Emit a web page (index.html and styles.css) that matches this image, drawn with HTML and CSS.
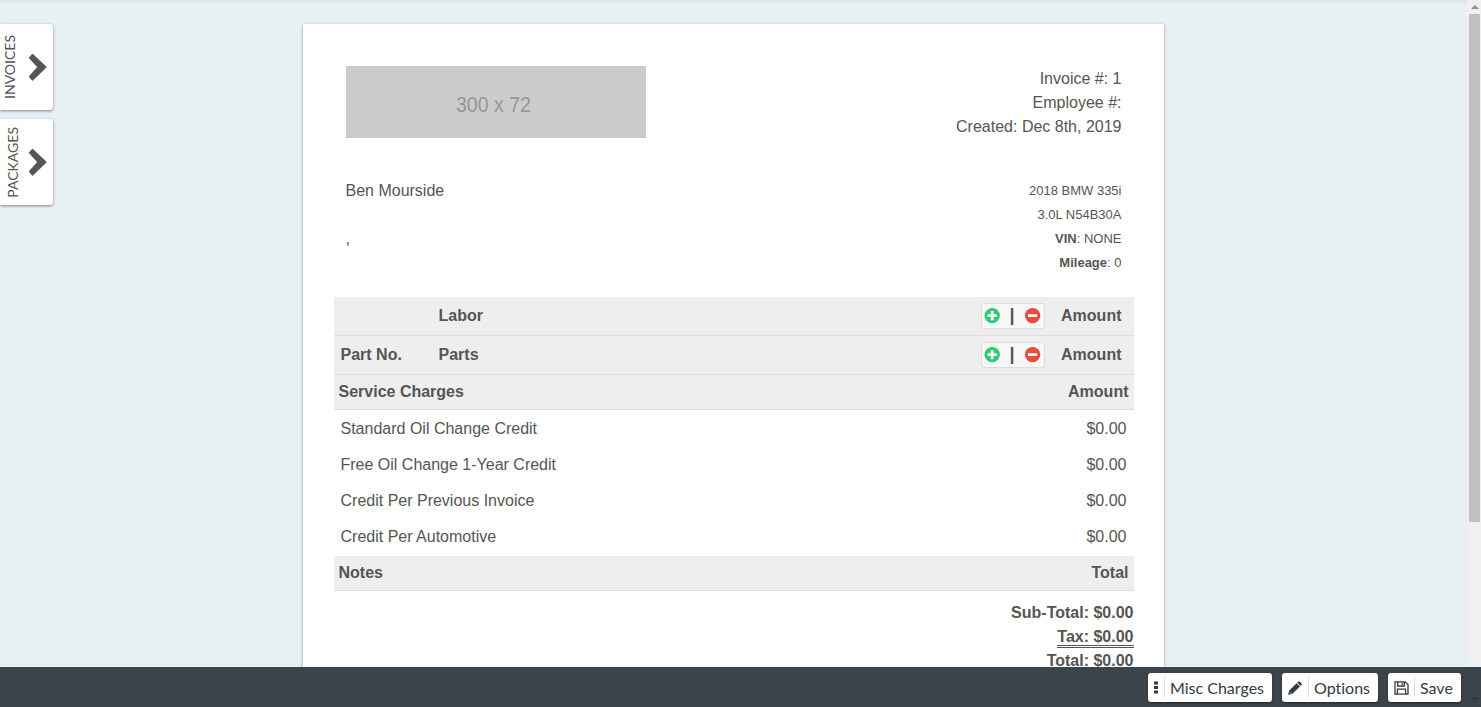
FILE: index.html
```html
<!DOCTYPE html>
<html lang="en">
<head>
<meta charset="utf-8">
<title>Invoice</title>
<link rel="stylesheet" href="styles.css">
</head>
<body>
<svg width="0" height="0" class="defs">
  <symbol id="chevron" viewBox="0 0 20 28"><path d="M5.4 1.7 18.7 14.1 5.4 26.8 2.7 23.6 11.3 14.1 2.7 4.8z" fill="#555" stroke="#555" stroke-width="1.6" stroke-linejoin="round"/></symbol>
  <symbol id="plus" viewBox="0 0 16 16"><circle cx="8.2" cy="7.6" r="7.7" fill="#2ecc71"/><path d="M8.2 3v9.2M3.6 7.6h9.2" stroke="#fff" stroke-width="2.7"/></symbol>
  <symbol id="minus" viewBox="0 0 16 16"><circle cx="8.6" cy="7.6" r="7.7" fill="#e74c3c"/><path d="M4 7.6h9.2" stroke="#fff" stroke-width="2.7"/></symbol>
</svg>
<div class="page">
  <nav class="tabs">
    <div class="tab"><span class="tab-label">INVOICES</span><svg class="chevron"><use href="#chevron"/></svg></div>
    <div class="tab packages"><span class="tab-label">PACKAGES</span><svg class="chevron"><use href="#chevron"/></svg></div>
  </nav>
  <main class="sheet">
    <header class="top">
      <svg class="logo" viewBox="0 0 300 72"><rect width="300" height="72" fill="#ccc"/><text x="110" y="46" textLength="75" lengthAdjust="spacingAndGlyphs">300 x 72</text></svg>
      <div class="meta"><div>Invoice #: 1</div><div>Employee #:</div><div>Created: Dec 8th, 2019</div></div>
    </header>
    <section class="parties">
      <div class="customer"><div>Ben Mourside</div><div>&nbsp;</div><div>,</div></div>
      <div class="vehicle"><div>2018 BMW 335i</div><div>3.0L N54B30A</div><div><b>VIN</b>: NONE</div><div><b>Mileage</b>: 0</div></div>
    </section>
    <section class="table">
      <div class="head tall"><span class="part"></span><span class="name">Labor</span><span class="tools"><svg><use href="#plus"/></svg><span>|</span><svg><use href="#minus"/></svg></span><span>Amount</span></div>
      <div class="head tall"><span class="part">Part No.</span><span class="name">Parts</span><span class="tools"><svg><use href="#plus"/></svg><span>|</span><svg><use href="#minus"/></svg></span><span>Amount</span></div>
      <div class="head"><span>Service Charges</span><span>Amount</span></div>
      <div class="rows">
        <div class="row"><span>Standard Oil Change Credit</span><span>$0.00</span></div>
        <div class="row"><span>Free Oil Change 1-Year Credit</span><span>$0.00</span></div>
        <div class="row"><span>Credit Per Previous Invoice</span><span>$0.00</span></div>
        <div class="row"><span>Credit Per Automotive</span><span>$0.00</span></div>
      </div>
      <div class="head"><span>Notes</span><span>Total</span></div>
    </section>
    <section class="totals"><div>Sub-Total: $0.00</div><div><span class="tax">Tax: $0.00</span></div><div>Total: $0.00</div></section>
  </main>
</div>
<div class="scrollbar"><svg class="up" viewBox="0 0 8 4"><path d="M0 4 4 0l4 4z" fill="#909090"/></svg><div class="thumb"></div></div>
<footer class="bar">
  <button class="btn misc"><svg width="4" height="14" viewBox="0 0 4 14"><path d="M0 .5h4v3H0zM0 5h4v3H0zM0 9.5h4v3H0z" fill="#333b42"/></svg><span>Misc Charges</span></button>
  <button class="btn options"><svg width="14" height="14" viewBox="0 0 14 14"><path d="M.3 13.5 1.4 9.4 8.6 2.6l3.1 3L4.6 12.5zM9.4 1.8 10.2 1q.8-.7 1.6 0l1.6 1.5q.7.8 0 1.6l-.8.7z" fill="#333b42" stroke="#333b42" stroke-width=".4"/><path d="M1.6 11.1l1.2 1.2" stroke="#fff" stroke-width=".8"/></svg><span>Options</span></button>
  <button class="btn save"><svg width="15" height="14" viewBox="0 0 15 14"><path d="M1 .8h10.2L14 3.6v9.6H1zM3.7 1v4h6.6V1M3.4 13V8.2h8.2V13M8.2 1.8v2" fill="none" stroke="#333b42" stroke-width="1.3"/></svg><span>Save</span></button>
  <svg class="down" viewBox="0 0 8 4"><path d="M0 0h8L4 4z" fill="#30363d"/></svg>
</footer>
</body>
</html>
```
FILE: styles.css
```css
* { box-sizing: border-box; }
html, body { margin: 0; height: 100%; overflow: hidden; }
body { background: #e7f0f3; color: #555; font: 16px/24px "Liberation Sans", Arial, sans-serif; }
.defs { position: absolute; }
symbol { overflow: visible; }
.page { height: 707px; width: 1467px; padding-top: 24px; display: flex; overflow: hidden; box-shadow: inset 0 5px 5px -4px rgba(0,0,0,.08); }
.tabs { width: 302.5px; display: flex; flex-direction: column; gap: 9px; }
.tab { width: 53px; height: 86px; background: #fff; border-radius: 0 3px 3px 0; box-shadow: 0 1px 3px rgba(0,0,0,.45); display: flex; align-items: center; }
.tab-label { writing-mode: vertical-rl; transform: rotate(180deg); font: 14px/20px Lato, sans-serif; width: 20px; text-align: center; }
.packages .tab-label { width: 26px; line-height: 26px; }
.chevron { width: 20px; height: 28px; margin-left: 7px; }
.packages .chevron { margin-left: 1px; }
.sheet { width: 861px; height: 900px; flex: none; background: #fff; box-shadow: 0 1px 3px rgba(0,0,0,.35); padding: 42px 30px 0 31px; }
.top { display: flex; justify-content: space-between; padding: 0 12px; height: 113px; }
.logo { width: 300px; height: 72px; }
.logo text { font: 22.5px "Liberation Sans", Arial, sans-serif; fill: #969696; }
.meta, .vehicle, .totals { text-align: right; }
.meta { padding-top: 1px; }
.parties { height: 118px; padding: 0 12px; display: flex; justify-content: space-between; }
.vehicle { font-size: 13px; }
.head { height: 35px; background: #eee; border-bottom: 1px solid #ddd; font-weight: bold; display: flex; justify-content: space-between; padding: 5px 5px 0; }
.head.tall { height: 39px; padding: 0 12px 0 7px; align-items: center; justify-content: flex-start; }
.part { width: 98px; }
.name { flex: 1; }
.tools { width: 64px; height: 26px; margin-right: 16px; border: 1px solid #ddd; border-radius: 3px; background: #f7f7f7; display: flex; align-items: center; justify-content: space-between; padding: 0 4px 1px 2px; font-size: 18px; }
.tools svg { width: 16px; height: 16px; overflow: visible; }
.tools span { margin-bottom: 2px; }
.rows { height: 146px; }
.row { height: 36px; padding: 7px 7px 0 7px; display: flex; justify-content: space-between; }
.totals { font-weight: bold; padding-top: 10px; }
.tax { display: inline-block; height: 23px; border-bottom: 3px double #555; }
.scrollbar { position: absolute; right: 0; top: 0; width: 14px; height: 707px; background: #f0f0f0; padding: 5px 1px 0 2px; display: flex; flex-direction: column; align-items: center; }
.up { width: 8px; height: 4px; }
.thumb { width: 11px; height: 508px; margin-top: 5px; background: #c1c1c1; }
.bar { position: absolute; left: 0; right: 0; bottom: 0; height: 40px; background: #3b434b; display: flex; align-items: center; justify-content: flex-end; gap: 10px; padding-right: 4px; }
.btn { height: 29px; border: 0; border-radius: 3px; padding: 0; background: #fff; color: #333b42; font: 16px/20px Lato, sans-serif; font-variant-ligatures: none; display: flex; align-items: center; box-shadow: 0 1px 2px rgba(0,0,0,.4); }
.btn svg { margin-top: 1px; }
.btn span { border-left: 1px solid #ddd; padding: 1px 0 0 5px; line-height: 19px; white-space: nowrap; }
.misc { width: 124px; padding-left: 6px; }
.misc svg { margin-right: 6px; }
.options { width: 96px; padding-left: 6px; }
.options svg { margin-right: 6px; }
.save { width: 73px; padding-left: 6px; }
.save svg { margin-right: 5px; }
.down { width: 8px; height: 4px; margin-top: 24px; margin-right: -2px; }
```
